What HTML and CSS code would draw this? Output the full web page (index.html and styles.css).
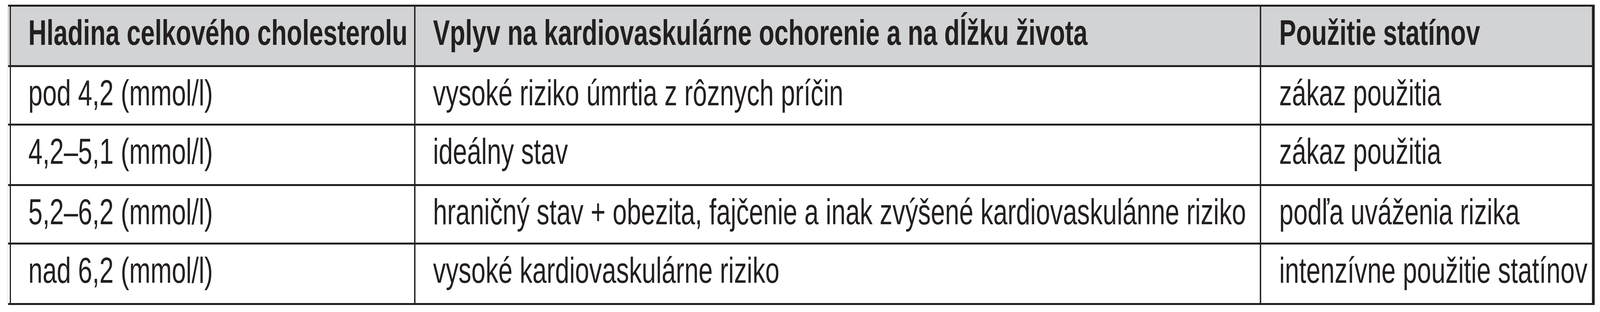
FILE: index.html
```html
<!DOCTYPE html>
<html lang="sk">
<head>
<meta charset="utf-8">
<title>Hladina cholesterolu</title>
<link rel="stylesheet" href="styles.css">
</head>
<body>
<div class="frame">
  <main class="page">
    <div class="table">
      <div class="cell head c1">Hladina celkového cholesterolu</div>
      <div class="cell head c2">Vplyv na kardiovaskulárne ochorenie a na dĺžku života</div>
      <div class="cell head c3">Použitie statínov</div>

      <div class="cell c1">pod 4,2 (mmol/l)</div>
      <div class="cell c2">vysoké riziko úmrtia z rôznych príčin</div>
      <div class="cell c3">zákaz použitia</div>

      <div class="cell c1">4,2–5,1 (mmol/l)</div>
      <div class="cell c2">ideálny stav</div>
      <div class="cell c3">zákaz použitia</div>

      <div class="cell c1">5,2–6,2 (mmol/l)</div>
      <div class="cell c2">hraničný stav + obezita, fajčenie a inak zvýšené kardiovaskulánne riziko</div>
      <div class="cell c3">podľa uváženia rizika</div>

      <div class="cell c1">nad 6,2 (mmol/l)</div>
      <div class="cell c2">vysoké kardiovaskulárne riziko</div>
      <div class="cell c3">intenzívne použitie statínov</div>
    </div>
  </main>
</div>
</body>
</html>
```
FILE: styles.css
```css
html, body {
  margin: 0;
  padding: 0;
  background: #ffffff;
  overflow: hidden;
}

.frame {
  width: 100vw;
  height: 800px;
  overflow: clip;
}

.page {
  width: 5761px;
  height: 800px;
  transform-origin: 0 0;
}

@media (max-width: 5760px) {
  .page {
    transform: scaleX(0.710988);
  }
}

.table {
  margin: 12px 0 0 29px;
  width: 5708px;
  display: grid;
  grid-template-columns: 1462px 3040px 1191px;
  grid-template-rows: 150px 145px 150px 145px 150px;
  column-gap: 5px;
  row-gap: 5px;
  padding: 5px 5px 5px 0;
  background: #231f20;
  font-family: "Liberation Sans", Arial, sans-serif;
  font-size: 92px;
  line-height: 90px;
  color: #231f20;
}

.cell {
  background-color: #ffffff;
  padding-top: 21px;
  white-space: nowrap;
  overflow: hidden;
  box-sizing: border-box;
}

.head {
  background-color: #d1d3d4;
  font-weight: bold;
  font-size: 91px;
  padding-top: 21.5px;
}

.c1 {
  padding-left: 73px;
  background-image: linear-gradient(to right, transparent 6px, #231f20 6px, #231f20 11px, transparent 11px);
}

.c2 {
  padding-left: 63px;
}

.c3 {
  padding-left: 65px;
}
```
